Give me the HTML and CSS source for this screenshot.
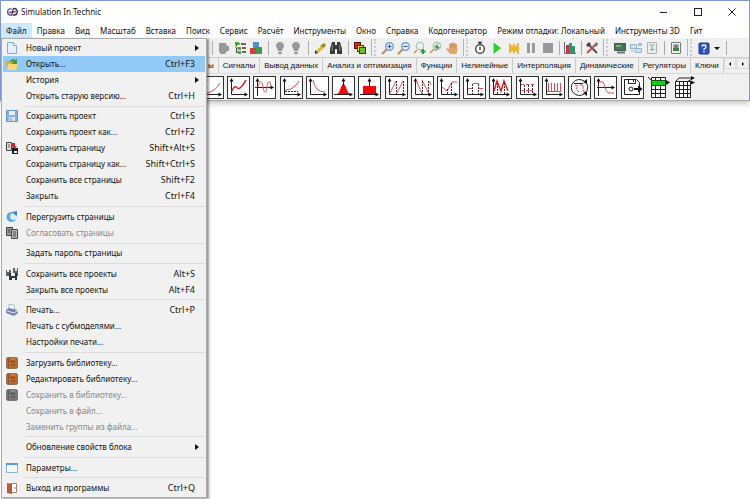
FILE: index.html
```
<!DOCTYPE html>
<html lang="ru">
<head>
<meta charset="utf-8">
<title>Simulation In Technic</title>
<link rel="stylesheet" href="styles.css">
</head>
<body>
<svg class="defs" aria-hidden="true">
  <symbol id="axes" viewBox="0 0 21 21"><path d="M3.500 3.500V17.500H17" fill="none" stroke="#222"/><path d="M3.500 1l2 3.500h-4zM20 17.500l-3.500-2v4z" fill="#111" stroke="none"/></symbol>
  <symbol id="book" viewBox="0 0 12 12"><rect x=".5" y=".5" width="11" height="11" rx="1.500" fill="currentColor" stroke="#0005"/><path d="M2.500 1v10" stroke="#0003"/><path d="M4 4.500h5M5 8q2 1 4-1" stroke="#4a200890" fill="none"/><path d="M5 2h4" stroke="#ffd9a066"/></symbol>
  <symbol id="bulb" viewBox="0 0 14 14"><path d="M7 1C4.500 1 3 3 3 5c0 2 2 3 2 5h4c0-2 2-3 2-5 0-2-1.500-4-4-4z" fill="#999"/><path d="M5.500 11h3v2h-3z" fill="#858585"/></symbol>
  <symbol id="lens" viewBox="0 0 14 14"><path d="M1 13l4.500-4.500" stroke="#b98d55" stroke-width="2"/><circle cx="8.500" cy="5.500" r="3.800" fill="#dceafc" stroke="#6f94cf" stroke-width="1.300"/></symbol>
</svg>
<div class="window">
  <header class="titlebar">
    <svg class="logo" viewBox="0 0 12 10"><path d="M5 1.500C1 1 0 4 1 6.500s3 2 4 2" fill="none" stroke="#62669c" stroke-width="1.700"/><path d="M6.500 1.500c4-1 5 2 4.500 4.500s-3 2.500-4.500 2.500" fill="none" stroke="#433063" stroke-width="1.600"/><path d="M2 5.500l8-1" stroke="#b73d63" stroke-width="1.600"/><path d="M7 1L5 9" stroke="#433063" stroke-width="1.400"/></svg>
    <h1>Simulation In Technic</h1>
    <div class="winbtns">
      <button aria-label="Свернуть"><svg viewBox="0 0 10 10"><path d="M1 5.500h7" stroke="#222"/></svg></button>
      <button aria-label="Развернуть"><svg viewBox="0 0 10 10"><rect x="1.500" y="1.500" width="7" height="7" fill="none" stroke="#222"/></svg></button>
      <button aria-label="Закрыть окно"><svg viewBox="0 0 10 10"><path d="M1.500 1.500l7 7m0-7l-7 7" stroke="#222"/></svg></button>
    </div>
  </header>
  <nav class="menubar">
    <button class="open">Файл</button><button>Правка</button><button>Вид</button><button>Масштаб</button><button>Вставка</button><button>Поиск</button><button>Сервис</button><button>Расчёт</button><button>Инструменты</button><button>Окно</button><button>Справка</button><button>Кодогенератор</button><button>Режим отладки: Локальный</button><button>Инструменты 3D</button><button>Гит</button>
  </nav>
  <div class="toolbar">
    <div class="group">
      <i class="sep"></i>
      <button aria-label="Деталь"><svg viewBox="0 0 14 14"><path d="M2 2h7l1 3h2v5h-2l-2 3H4l-2-2z" fill="#989898"/></svg></button>
      <button aria-label="Дерево"><svg viewBox="0 0 14 14"><path d="M3.500 2v10M3.500 3H7M3.500 7H7M3.500 11H7" fill="none" stroke="#444"/><path d="M2 1h4v3H2zM5 6h3v3H5zM5 10h3v3H5z" fill="#4aa83c"/><path d="M8 3h5M9 7h4M9 11h4" stroke="#443a20" stroke-width="1.500"/><path d="M2 5h2v2H2z" fill="#ceb64c"/></svg></button>
      <button aria-label="Блоки"><svg viewBox="0 0 14 14"><rect x="4" y="1" width="6" height="6" fill="#4d91c9"/><rect x="1" y="7" width="6" height="6" fill="#cf4438"/><rect x="7" y="6" width="6" height="7" fill="#3d9a55"/></svg></button>
      <i class="sep"></i>
      <button aria-label="Лампа"><svg><use href="#bulb"/></svg></button>
      <button aria-label="Лампа выкл."><svg><use href="#bulb"/></svg></button>
      <i class="sep"></i>
      <button aria-label="Фонарь"><svg viewBox="0 0 14 14"><path d="M2 11l6-6 3 2-6 5z" fill="#d9b83b"/><path d="M7 5l4-3 2 2-2 3z" fill="#a98624"/><path d="M2 9l3 3-3 1z" fill="#333"/></svg></button>
      <button aria-label="Найти"><svg viewBox="0 0 14 14"><path d="M3 1h3v3h2V1h3l2 7v5H8V8H6v5H1V8z" fill="#383838"/><path d="M3.500 4L3 10M10.500 4l.5 6" stroke="#888"/></svg></button>
      <i class="sep"></i>
      <button aria-label="Окна"><svg viewBox="0 0 14 14"><rect x="1.500" y="1.500" width="6" height="6" fill="#d52818" stroke="#5c130c"/><rect x="4.500" y="4.500" width="6" height="6" fill="#edd82e" stroke="#463f08"/><rect x="6.500" y="6.500" width="6" height="6" fill="#6ebf32" stroke="#22420e"/></svg></button>
    </div>
    <i class="grip"></i>
    <div class="group">
      <button aria-label="Увеличить"><svg viewBox="0 0 14 14"><use href="#lens"/><path d="M6.500 5.500h4m-2-2v4" stroke="#315ba8"/></svg></button>
      <button aria-label="Уменьшить"><svg viewBox="0 0 14 14"><use href="#lens"/><path d="M6.500 5.500h4" stroke="#315ba8"/></svg></button>
      <button aria-label="Показать всё"><svg viewBox="0 0 14 14"><circle cx="7" cy="5" r="3.800" fill="#eef3ee" stroke="#a4b8a8"/><path d="M1 12l3-3" stroke="#b98d55" stroke-width="1.500"/><path d="M10 8v5M7.500 10.500h5" stroke="#2f9a3f" stroke-width="2"/></svg></button>
      <button aria-label="Прежний вид"><svg viewBox="0 0 14 14"><circle cx="8" cy="5" r="3.800" fill="#e5f1e4" stroke="#a4b8a8"/><path d="M1 12l4-4" stroke="#b98d55" stroke-width="1.500"/><path d="M10 2L5 6l3 1-3 4 6-5-3-1z" fill="#2f9a3f"/></svg></button>
      <button aria-label="Рука"><svg viewBox="0 0 14 14"><path d="M5 13L1 8l1-1 2 1V3l1.500-.5L6 1.500h1.500l.5.500 1.500-.3.800 1L12 3l.5 6-1 4z" fill="#dda76c"/><path d="M6 3v4m2-5v5m2-4v4" stroke="#bb814b" stroke-width=".7"/></svg></button>
    </div>
    <i class="grip"></i>
    <div class="group run">
      <button aria-label="Время"><svg viewBox="0 0 14 14"><circle cx="7" cy="8" r="4.300" fill="#fff" stroke="#333" stroke-width="1.300"/><path d="M5 1.500h4M7 1.500v2M7 5.500V9" stroke="#333" stroke-width="1.300"/></svg></button>
      <button aria-label="Пуск"><svg viewBox="0 0 14 14"><path d="M3.500 1.500L11 7l-7.500 6z" fill="#2bd22b"/></svg></button>
      <button aria-label="Шаг"><svg viewBox="0 0 14 14"><path d="M2 2l4 3.500V2l4 3.500V2h2v11h-2V9.500L6 13V9.500L2 13z" fill="#efb52e"/></svg></button>
      <button aria-label="Пауза"><svg viewBox="0 0 14 14"><path d="M3 2h3v10H3zM8 2h3v10H8z" fill="#999"/></svg></button>
      <button aria-label="Стоп"><svg viewBox="0 0 14 14"><path d="M2 2h10v10H2z" fill="#999"/></svg></button>
      <i class="sep"></i>
      <button aria-label="Диаграмма"><svg viewBox="0 0 14 14"><path d="M1.500 1v11.500H13" fill="none" stroke="#667"/><path d="M3 4h3v8H3z" fill="#bf3647"/><path d="M6 2h3v10H6z" fill="#319565"/><path d="M9 5h3v7H9z" fill="#3a9170"/></svg></button>
      <i class="sep"></i>
      <button aria-label="Настройка"><svg viewBox="0 0 14 14"><path d="M3 3l9 9" stroke="#555" stroke-width="2"/><path d="M1 4l3-3 2 2-3 3z" fill="#444"/><path d="M2 12L12 2" stroke="#c35542" stroke-width="2"/><path d="M8 5l4-4 1 3-3 2z" fill="#777"/></svg></button>
    </div>
    <i class="grip"></i>
    <div class="group">
      <button aria-label="Монитор"><svg viewBox="0 0 14 14"><rect x="1.500" y="2.500" width="11" height="7" fill="#3f7660" stroke="#4c5857"/><path d="M3 4h5v2H3z" fill="#79b765"/><path d="M4 11.500h8" stroke="#73726f" stroke-width="2"/></svg></button>
      <button aria-label="Сеть"><svg viewBox="0 0 14 14"><path d="M1.500 3.500h6v4h-6zM6.500 7.500h6v4h-6z" fill="#cfe2f0" stroke="#92b3cb"/><path d="M9 2h4v3H9z" fill="#9cc4dd"/><path d="M2 10h3" stroke="#92b3cb"/></svg></button>
      <button aria-label="Документ"><svg viewBox="0 0 14 14"><path d="M2.500 1.500h9v11h-9z" fill="#e9efec" stroke="#aab8b1"/><path d="M4.500 4h5M7 5v5M5.500 8.500h4" stroke="#80a98f"/></svg></button>
      <i class="sep"></i>
      <button aria-label="Рисунок"><svg viewBox="0 0 14 14"><path d="M2.500 1.500h9v11h-9z" fill="#f5f8f5" stroke="#777"/><path d="M4 3h6v7H4z" fill="#83bad5"/><circle cx="7" cy="5.500" r="1.700" fill="#bc5a35"/><path d="M4 7h6v3H4z" fill="#497f45"/></svg></button>
    </div>
    <i class="grip"></i>
    <div class="group">
      <button aria-label="Справка"><svg viewBox="0 0 14 14"><rect x="2" y="2" width="10" height="11" rx="1" fill="#2b52bd" stroke="#1e3b91"/><path d="M5 5.500q0-1.500 2-1.500t2 1.500T7 8v1M7 10v1.500" fill="none" stroke="#fff" stroke-width="1.300"/></svg></button>
      <button class="caret" aria-label="Ещё"><svg viewBox="0 0 10 14"><path d="M2 6h6L5 9z" fill="#111"/></svg></button>
      <i class="sep"></i>
    </div>
  </div>
  <div class="tabs">
    <button>ы</button><button>Сигналы</button><button>Вывод данных</button><button>Анализ и оптимизация</button><button>Функции</button><button>Нелинейные</button><button>Интерполяция</button><button>Динамические</button><button>Регуляторы</button><button>Ключи</button>
    <button class="arrow" aria-label="Влево"><svg viewBox="0 0 4 4"><path d="M3 0v4L1 2z"/></svg></button><button class="arrow" aria-label="Вправо"><svg viewBox="0 0 4 4"><path d="M1 0v4l2-2z"/></svg></button>
  </div>
  <div class="palette">
    <button aria-label="Парабола"><svg viewBox="0 0 21 21"><use href="#axes"/><path d="M4 16q9-1 14-10"/></svg></button>
    <button aria-label="Полином"><svg viewBox="0 0 21 21"><use href="#axes"/><path class="bold" d="M4 14q2-5 4-4c3 3 4 1 6-1s2-3 4-6"/></svg></button>
    <button aria-label="Синусоида"><svg viewBox="0 0 21 21"><path class="ink" d="M3.500 3v16M1 10.500h17"/><path class="tip" d="M3.500 1l2 3.500h-4zM20 10.500l-3.500-2v4z"/><path d="M4 10C6 2 8 4 9 10s3 8 4 0 3-6 4-1"/></svg></button>
    <button aria-label="Экспонента"><svg viewBox="0 0 21 21"><use href="#axes"/><path class="dash" d="M4 14.500h13"/><path d="M4 13q9 0 14-9"/></svg></button>
    <button aria-label="Обратная экспонента"><svg viewBox="0 0 21 21"><use href="#axes"/><path d="M6 3q2 12 12 12"/></svg></button>
    <button aria-label="Нормальный шум"><svg viewBox="0 0 21 21"><path class="fill" d="M3 18q4-3 5-8l2-3h1l2 3q1 5 5 8z"/><path class="ink" d="M10.500 3v6M1 17.500h17"/><path class="tip" d="M10.500 1l2 3.500h-4zM20 17.500l-3.500-2v4z"/></svg></button>
    <button aria-label="Равномерный шум"><svg viewBox="0 0 21 21"><path class="fill" d="M4 9h13v9H4z"/><path class="ink" d="M10.500 3v6M1 17.500h17"/><path class="tip" d="M10.500 1l2 3.500h-4zM20 17.500l-3.500-2v4z"/></svg></button>
    <button aria-label="Пила"><svg viewBox="0 0 21 21"><use href="#axes"/><path d="M4 16L10 4M11 16L17 4"/><path class="dash" d="M10.500 4v13M17.500 4v13"/></svg></button>
    <button aria-label="Обратная пила"><svg viewBox="0 0 21 21"><use href="#axes"/><path d="M4 3l6 14M10 3l7 14M17 4l2 4"/><path class="dash" d="M10.500 4v13M16.500 4v13"/></svg></button>
    <button aria-label="Кусочная"><svg viewBox="0 0 21 21"><use href="#axes"/><path d="M4 10l5 4 5-9h5"/><path class="dash" d="M9.500 12v5M13.500 6v11"/></svg></button>
    <button aria-label="Ступени"><svg viewBox="0 0 21 21"><use href="#axes"/><path d="M4 11.500h4M9 6.500h6M15 11.500h4"/><path class="dash" d="M8.500 7v10M14.500 7v10"/></svg></button>
    <button aria-label="Треугольники"><svg viewBox="0 0 21 21"><use href="#axes"/><path class="bold" d="M4 14l3-10 4 10 3-10 4 10"/><path class="dash" d="M7.500 6v11M14.500 6v11"/></svg></button>
    <button aria-label="Меандр"><svg viewBox="0 0 21 21"><use href="#axes"/><path d="M4 7.500h3M9 7.500h3M14 7.500h4M5 13.500h12" stroke-dasharray="3 1"/><path class="dash" d="M7.500 8v9M11.500 8v9M15.500 8v9"/></svg></button>
    <button aria-label="Импульсы"><svg viewBox="0 0 21 21"><use href="#axes"/><path d="M4 14.500h14M5.500 6v8M8.500 6v8M11.500 6v8M14.500 6v8M17.500 6v8"/></svg></button>
    <button aria-label="Циклический сигнал"><svg viewBox="0 0 21 21"><path class="ink" d="M15 4a8 8 0 1 0 0 13M17 5q3 4 1 9"/><path class="tip" d="M18 2v5l-4-2zM18 19v-5l-4 2z"/><path d="M6 8l3 1-2 3 3 3M11 8h3v6h3" stroke-dasharray="3 1"/><path class="ink" d="M5 6.500h9"/></svg></button>
    <button aria-label="Затухание"><svg viewBox="0 0 21 21"><path class="ink" d="M3.500 3v16M2 10.500h15"/><path class="tip" d="M3.500 1l2 3.500h-4zM20 10.500l-3.500-2v4z"/><path d="M4 5h4c2 2 2 9 5 11h6"/></svg></button>
    <button aria-label="Чтение из файла"><svg viewBox="0 0 21 21"><path class="ink" d="M2.500 2.500h12l3 3v12h-15zM6.500 2.500v4h7v-4M11.500 3v2"/><circle class="ink" cx="9" cy="12" r="2"/><path class="tip" d="M12 11h4V8.500l4.500 3.500-4.500 3.500V13h-4z"/></svg></button>
    <button class="plain" aria-label="Таблица"><svg viewBox="0 0 21 21"><path class="ink paper" d="M3.500.500h14v20h-14zM3.500 8.500h14M3.500 12.500h14M3.500 16.500h14M7.500.500v20M12.500.500v20"/><path class="green" d="M3.500 3.500h14v5h-14z"/><path class="ink" d="M0 0l3 3M18 5.500h3"/><path class="tip" d="M22 5.500l-4-2.500v5z"/></svg></button>
    <button class="plain" aria-label="Двумерная таблица"><svg viewBox="0 0 21 21"><path class="ink paper" d="M1.500 4.500h15v16h-15zM1.500 8.500h15M1.500 12.500h15M1.500 16.500h15M5.500 4.500v16M9.500 4.500v16M13.500 4.500v16"/><path class="ink" d="M2 4l3-3h13M13 5l5-3M16 5.500h3"/><path class="tip" d="M21 1l-4-2v4zM21 5.500l-4-2v4z"/></svg></button>
  </div>
  <div class="menu">
    <button><svg viewBox="0 0 12 12"><path d="M1.500.500h6l3 3v8h-9z" fill="#e4f1fc" stroke="#86acd0"/><path d="M7.500.500v3h3" fill="#fff" stroke="#86acd0"/></svg><span>Новый проект</span><b></b></button>
    <button class="active"><svg viewBox="0 0 12 12"><path d="M0 3h4l1 1h6v7H1z" fill="#d9ac3a"/><path d="M2 6h10l-2 6H1z" fill="#f7db72"/><path d="M3 4q3-5 6-2l2-1v5H6l1-2Q5 3 3 4z" fill="#3f9a45"/></svg><span>Открыть...</span><kbd>Ctrl+F3</kbd></button>
    <button><span>История</span><b></b></button>
    <button><span>Открыть старую версию...</span><kbd>Ctrl+H</kbd></button>
    <hr>
    <button><svg viewBox="0 0 12 12"><path d="M.5.500h11v11H.5z" fill="#7eb8e4" stroke="#669bc9"/><path d="M3 1h6v4H3z" fill="#e3eef8"/><path d="M3 7h6v4H3z" fill="#dbe5f0"/><path d="M1 3h2M9 3h2M5 8v3" stroke="#c56c78"/></svg><span>Сохранить проект</span><kbd>Ctrl+S</kbd></button>
    <button><span>Сохранить проект как...</span><kbd>Ctrl+F2</kbd></button>
    <button><svg viewBox="0 0 12 12"><path d="M.5.500h5v8h-5z" fill="#d9ddd5" stroke="#444"/><path d="M2 3h2M2 5h2" stroke="#30804b"/><path d="M5 1h4v3h2L8 7 5 4z" fill="#d6242d"/><path d="M6 6h6v6H6z" fill="#182026"/><path d="M8 9h3v2H8z" fill="#fff"/></svg><span>Сохранить страницу</span><kbd>Shift+Alt+S</kbd></button>
    <button><span>Сохранить страницу как...</span><kbd>Shift+Ctrl+S</kbd></button>
    <button><span>Сохранить все страницы</span><kbd>Shift+F2</kbd></button>
    <button><span>Закрыть</span><kbd>Ctrl+F4</kbd></button>
    <hr>
    <button><svg viewBox="0 0 12 12"><circle cx="5.500" cy="6" r="5" fill="#5aa6df"/><path d="M11 6a3.500 3.500 0 1 1-4-4" fill="#d9edfb"/><path d="M6 1l5-1v5z" fill="#3b87c8"/></svg><span>Перегрузить страницы</span></button>
    <button disabled><svg viewBox="0 0 12 12"><path d="M.5.500h6v8h-6z" fill="#999" stroke="#444"/><path d="M5.500 2.500h6v9h-6z" fill="#bbb" stroke="#444"/><path d="M7 5h3M7 7h3M7 9h3M2 3h2M2 5h2" stroke="#444"/></svg><span>Согласовать страницы</span></button>
    <hr>
    <button><span>Задать пароль страницы</span></button>
    <hr>
    <button><svg viewBox="0 0 12 12"><path d="M0 2h5v6H0zM7 0h5v8H7z" fill="#5b6367"/><path d="M3 5h8v7H3z" fill="#2d363a"/><path d="M1 2h2v2H1zM9 0h2v3H9zM5 5h4v3H5zM6 10h3v2H6z" fill="#e8ece8"/></svg><span>Сохранить все проекты</span><kbd>Alt+S</kbd></button>
    <button><span>Закрыть все проекты</span><kbd>Alt+F4</kbd></button>
    <hr>
    <button><svg viewBox="0 0 12 12"><path d="M3 0l5 1 1 5-6-1z" fill="#f5f8fd" stroke="#899abb" stroke-width=".7"/><path d="M0 6l3-2 8 2 1 3-4 3-8-3z" fill="#7483ab"/><path d="M1 7l7 2 3-2" stroke="#e4e9f3" fill="none"/></svg><span>Печать...</span><kbd>Ctrl+P</kbd></button>
    <button><span>Печать с субмоделями...</span></button>
    <button><span>Настройки печати...</span></button>
    <hr>
    <button><svg class="brown"><use href="#book"/></svg><span>Загрузить библиотеку...</span></button>
    <button><svg class="brown"><use href="#book"/></svg><span>Редактировать библиотеку...</span></button>
    <button disabled><svg class="gray"><use href="#book"/></svg><span>Сохранить в библиотеку...</span></button>
    <button disabled><span>Сохранить в файл...</span></button>
    <button disabled><span>Заменить группы из файла...</span></button>
    <hr>
    <button><span>Обновление свойств блока</span><b></b></button>
    <hr>
    <button><svg viewBox="0 0 12 12"><path d="M.5 1.500h11v9H.5z" fill="#f2f8fd" stroke="#8db2d3"/><path d="M0 1h12v2H0z" fill="#539bd8"/></svg><span>Параметры...</span></button>
    <hr>
    <button><svg viewBox="0 0 12 12"><path d="M4.500 1.500h6v9h-6z" fill="#fff" stroke="#9b8177"/><path d="M1 1l5 1v10l-5-1z" fill="#b95b34"/><path d="M8 6h3" stroke="#d58a62"/></svg><span>Выход из программы</span><kbd>Ctrl+Q</kbd></button>
  </div>
</div>
</body>
</html>
```
FILE: styles.css
```
* { box-sizing: border-box; }
body {
  margin: 0;
  min-height: 100vh;
  background: #fff;
  color: #111;
  font: 8px/14px "Noto Sans", "Open Sans", sans-serif;
}
button {
  margin: 0;
  padding: 0;
  border: 0;
  background: none;
  color: inherit;
  font: inherit;
  white-space: nowrap;
}
svg { display: block; }
.defs { position: absolute; width: 0; height: 0; }
.window {
  position: relative;
  border: 1px solid #7f97cf;
  border-bottom-color: #aaa;
  background: #f0f0f0;
  box-shadow: 0 2px 6px #0004;
}
.titlebar {
  display: flex;
  align-items: center;
  height: 22px;
  padding-left: 6px;
  gap: 3px;
  background: #fff;
}
.logo { width: 11px; height: 10px; }
h1 { margin: 0; font: inherit; }
.winbtns { display: flex; margin-left: auto; }
.winbtns button { width: 34px; display: grid; place-items: center; }
.winbtns svg { width: 10px; height: 10px; }
.menubar { display: flex; height: 15px; background: #fff; }
.menubar button { padding: 0 5px; }
.menubar .open { background: #cce8ff; }
.toolbar {
  display: flex;
  width: max-content;
  height: 19px;
  padding-left: 207px;
}
.group { display: flex; align-items: center; }
.group button { width: 16px; display: grid; place-items: center; }
.group svg { width: 14px; height: 14px; }
.group .caret { width: 10px; }
.group .caret svg { width: 10px; }
.sep { width: 8px; height: 14px; display: grid; justify-content: center; }
.sep::before { content: ""; width: 1px; background: #aaa; }
.run button + button { margin-left: 1px; }
.run .sep { width: 6px; }
.grip { width: 12px; padding: 1px 3px; display: flex; gap: 2px; }
.grip::before { content: ""; width: 1px; background: #b5b5b5; }
.grip::after { content: ""; border-left: 2px dotted #ccc; }
.tabs {
  display: flex;
  height: 16px;
  padding-left: 203px;
  border-top: 1px solid #ccc;
  font-family: "Liberation Sans", sans-serif;
}
.tabs button { padding: 0 4px; border-right: 1px solid #ccc; }
.tabs .arrow {
  width: 13px;
  height: 11px;
  padding: 0;
  display: grid;
  place-items: center;
  border: 1px solid #ddd;
}
.arrow svg { width: 4px; height: 4px; }
.palette {
  display: flex;
  justify-content: space-between;
  height: 27px;
  padding: 2px 53px 0 200px;
  border-top: 1px solid #ddd;
}
.palette button {
  width: 23px;
  height: 23px;
  border: 1px solid #333;
  background: #fff;
}
.palette svg { width: 21px; height: 21px; overflow: visible; fill: none; stroke: #e54a55; }
.palette .bold { stroke: #e02028; stroke-width: 1.5; }
.palette .ink { stroke: #222; }
.palette .paper { fill: #fff; }
.palette .dash { stroke: #333; stroke-dasharray: 2 1; }
.palette .tip { fill: #111; stroke: none; }
.palette .fill { fill: #f00808; stroke: none; }
.palette .green { fill: #14d014; stroke: #115511; }
.palette .plain { border-color: transparent; background: none; }
.menu {
  position: absolute;
  top: 37px;
  left: 0;
  width: 206px;
  height: calc(100vh - 39px);
  padding: 1px;
  display: flex;
  flex-direction: column;
  border: 1px solid #aaa;
  background: #f1f1f1;
  box-shadow: 2px 1px 2px #0006;
}
.menu button {
  display: grid;
  grid-template-columns: 20px 1fr auto;
  align-items: center;
  flex: none;
  height: 16px;
  padding: 0 10px 0 3px;
  text-align: left;
}
.menu .active { background: #91c9f7; }
.menu button:disabled { color: #888; }
.menu svg { grid-column: 1; width: 12px; height: 12px; }
.menu span { grid-column: 2; }
.menu kbd { font: inherit; font-size: 9px; }
.menu b {
  width: 0;
  margin-right: -6px;
  border: 3px solid transparent;
  border-left: 4px solid #111;
  border-right: 0;
}
.menu hr {
  flex: 1;
  width: calc(100% - 22px);
  margin: 0 0 0 22px;
  border: 0;
  background: linear-gradient(#dcdcdc, #dcdcdc) 0 50% / 100% 1px no-repeat;
}
.brown { color: #b86830; }
.gray { color: #777; }
```
